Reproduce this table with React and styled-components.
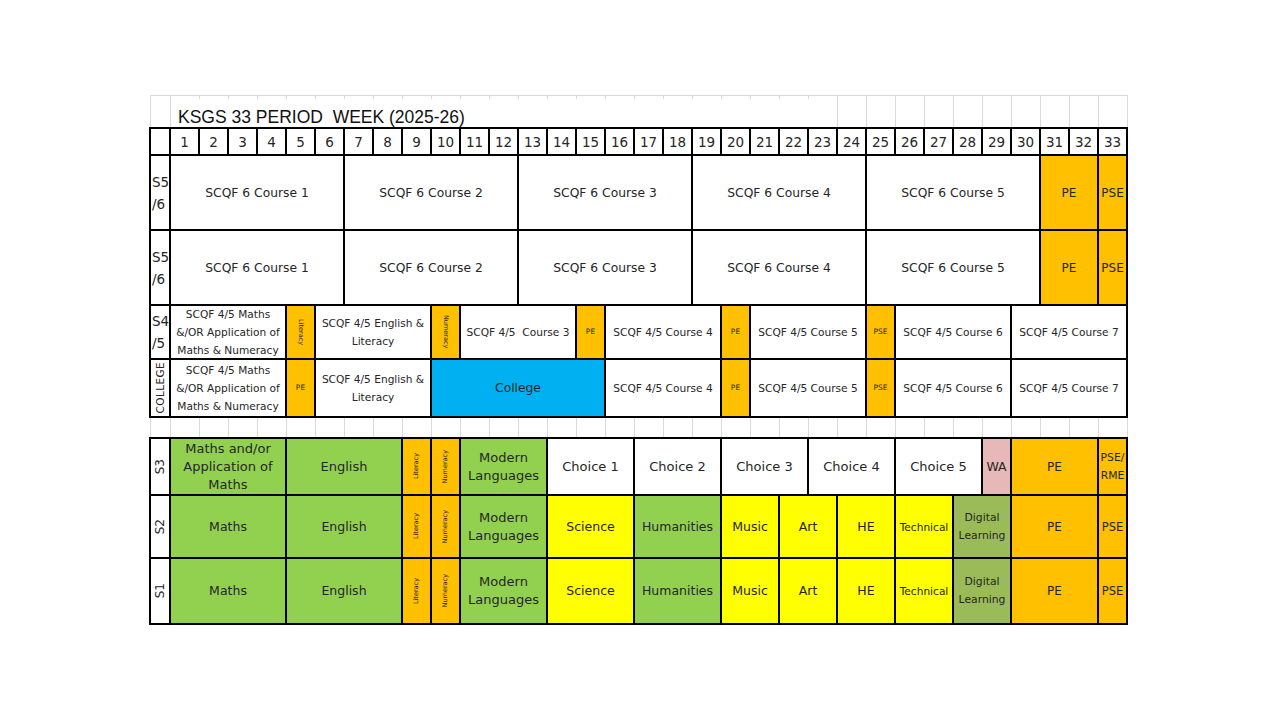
import styled, { createGlobalStyle } from 'styled-components';

const ORANGE = '#FFC000';
const GREEN = '#92D050';
const YELLOW = '#FFFF00';
const OLIVE = '#9BBB59';
const BLUE = '#00B0F0';
const PINK = '#E6B8B7';

const GlobalStyle = createGlobalStyle`
  html, body {
    margin: 0;
    padding: 0;
    background: #fff;
  }
  body {
    font-family: "DejaVu Sans", "Liberation Sans", sans-serif;
    color: #262626;
  }
`;

const Page = styled.div`
  width: 1280px;
  height: 720px;
  padding: 95px 0 0 149px;
  box-sizing: border-box;
  overflow: hidden;
`;

const Band = styled.div`
  display: grid;
  grid-template-columns: 20px repeat(33, 29px);
  grid-template-rows: ${({ $rows }) => $rows};
  width: fit-content;
`;

const Table = styled(Band)`
  border-left: 2px solid #000;
  border-top: 2px solid #000;
`;

const SheetBand = styled(Band)`
  margin-left: 1px;
  border-left: 1px solid #d9d9d9;
  border-top: ${({ $top }) => ($top ? '1px solid #d9d9d9' : 'none')};
`;

const GridLine = styled.div`
  grid-row: 1;
  grid-column: ${({ $col }) => $col};
  border-right: 1px solid #d9d9d9;
`;

const Title = styled.div`
  grid-row: 1;
  grid-column: 2 / span 23;
  margin: 3px 1px 0 0;
  background: #fff;
  z-index: 1;
  display: flex;
  align-items: flex-end;
  padding: 0 0 0 7px;
  font-family: "Liberation Sans", Arial, sans-serif;
  font-size: 17.5px;
  line-height: 19px;
  color: #111;
  white-space: pre;
`;

const Cell = styled.div`
  grid-column: span ${({ $span }) => $span || 1};
  background: ${({ $bg }) => $bg || '#fff'};
  border-right: 2px solid #000;
  border-bottom: 2px solid #000;
  display: flex;
  align-items: center;
  justify-content: center;
  text-align: center;
  font-size: ${({ $size }) => $size || 12.5}px;
  line-height: ${({ $lh }) => $lh || 18}px;
  white-space: pre;
  overflow: hidden;
  min-width: 0;
`;

const Label = styled.div`
  border-right: 2px solid #000;
  border-bottom: 2px solid #000;
  display: flex;
  flex-direction: column;
  justify-content: center;
  align-items: ${({ $rotate }) => ($rotate ? 'center' : 'flex-start')};
  padding-left: ${({ $rotate }) => ($rotate ? 0 : 1)}px;
  font-size: ${({ $size }) => $size || 13.5}px;
  line-height: 22px;
  white-space: pre;
  overflow: hidden;
`;

const Turned = styled.span`
  writing-mode: vertical-rl;
  transform: ${({ $down }) => ($down ? 'none' : 'rotate(180deg)')};
  font-size: ${({ $size }) => $size || 12}px;
  line-height: 1;
  letter-spacing: ${({ $spacing }) => $spacing || 0}px;
`;

const periods = Array.from({ length: 33 }, (_, i) => i + 1);

const scqf6 = [
  { span: 6, text: 'SCQF 6 Course 1' },
  { span: 6, text: 'SCQF 6 Course 2' },
  { span: 6, text: 'SCQF 6 Course 3' },
  { span: 6, text: 'SCQF 6 Course 4' },
  { span: 6, text: 'SCQF 6 Course 5' },
  { span: 2, text: 'PE', bg: ORANGE, size: 12 },
  { span: 1, text: 'PSE', bg: ORANGE, size: 12 },
];

const maths45 = { span: 4, text: 'SCQF 4/5 Maths\n&/OR Application of\nMaths & Numeracy', size: 10.6 };
const english45 = { span: 4, text: 'SCQF 4/5 English &\nLiteracy', size: 10.6 };
const seniorTail = [
  { span: 4, text: 'SCQF 4/5 Course 4' },
  { span: 1, text: 'PE', bg: ORANGE, size: 7.5 },
  { span: 4, text: 'SCQF 4/5 Course 5' },
  { span: 1, text: 'PSE', bg: ORANGE, size: 7.5 },
  { span: 4, text: 'SCQF 4/5 Course 6' },
  { span: 4, text: 'SCQF 4/5 Course 7' },
];

const topRows = [
  { label: 'S5\n/6', cells: scqf6 },
  { label: 'S5\n/6', cells: scqf6 },
  {
    label: 'S4\n/5',
    cells: [
      maths45,
      { span: 1, vtext: 'Literacy', down: true, bg: ORANGE },
      english45,
      { span: 1, vtext: 'Numeracy', down: true, bg: ORANGE },
      { span: 4, text: 'SCQF 4/5  Course 3' },
      { span: 1, text: 'PE', bg: ORANGE, size: 7.5 },
      ...seniorTail,
    ],
  },
  {
    label: 'COLLEGE',
    rotate: true,
    cells: [
      maths45,
      { span: 1, text: 'PE', bg: ORANGE, size: 7.5 },
      english45,
      { span: 6, text: 'College', bg: BLUE, size: 12.3 },
      ...seniorTail,
    ],
  },
];

const lowerCore = (mathsText, size) => [
  { span: 4, text: mathsText, bg: GREEN, size },
  { span: 4, text: 'English', bg: GREEN, size },
  { span: 1, vtext: 'Literacy', bg: ORANGE },
  { span: 1, vtext: 'Numeracy', bg: ORANGE },
  { span: 3, text: 'Modern\nLanguages', bg: GREEN, size: 13 },
];

const juniorTail = [
  { span: 3, text: 'Science', bg: YELLOW },
  { span: 3, text: 'Humanities', bg: GREEN },
  { span: 2, text: 'Music', bg: YELLOW },
  { span: 2, text: 'Art', bg: YELLOW },
  { span: 2, text: 'HE', bg: YELLOW },
  { span: 2, text: 'Technical', bg: YELLOW, size: 10.6 },
  { span: 2, text: 'Digital\nLearning', bg: OLIVE, size: 10.8 },
  { span: 3, text: 'PE', bg: ORANGE, size: 12 },
  { span: 1, text: 'PSE', bg: ORANGE, size: 11.5 },
];

const bottomRows = [
  {
    label: 'S3',
    cells: [
      ...lowerCore('Maths and/or\nApplication of\nMaths', 13),
      { span: 3, text: 'Choice 1', size: 13 },
      { span: 3, text: 'Choice 2', size: 13 },
      { span: 3, text: 'Choice 3', size: 13 },
      { span: 3, text: 'Choice 4', size: 13 },
      { span: 3, text: 'Choice 5', size: 13 },
      { span: 1, text: 'WA', bg: PINK, size: 12.5 },
      { span: 3, text: 'PE', bg: ORANGE, size: 12 },
      { span: 1, text: 'PSE/\nRME', bg: ORANGE, size: 10.8 },
    ],
  },
  { label: 'S2', cells: [...lowerCore('Maths', 12.5), ...juniorTail] },
  { label: 'S1', cells: [...lowerCore('Maths', 12.5), ...juniorTail] },
];

const renderCells = (cells, rowKey, defaultSize) =>
  cells.map((c, i) => (
    <Cell key={`${rowKey}-${i}`} $span={c.span} $bg={c.bg} $size={c.size || defaultSize}>
      {c.vtext ? (
        <Turned $down={c.down} $size={6.5}>
          {c.vtext}
        </Turned>
      ) : (
        c.text
      )}
    </Cell>
  ));

const gridLines = (key) =>
  Array.from({ length: 34 }, (_, i) => <GridLine key={`${key}-${i}`} $col={i + 1} />);

export default function App() {
  return (
    <Page>
      <GlobalStyle />

      <SheetBand $rows="31px" $top>
        {gridLines('title')}
        <Title>KSGS 33 PERIOD  WEEK (2025-26)</Title>
      </SheetBand>

      <Table $rows="27px 75px 75px 54px 58px">
        <Label />
        {periods.map((n) => (
          <Cell key={`p${n}`} $size={13.5}>
            {n}
          </Cell>
        ))}
        {topRows.map((row, r) => [
          <Label key={`tl${r}`} $rotate={row.rotate}>
            {row.rotate ? (
              <Turned $size={10.5} $spacing={0.4}>
                {row.label}
              </Turned>
            ) : (
              row.label
            )}
          </Label>,
          ...renderCells(row.cells, `t${r}`, r < 2 ? 12.3 : 10.6),
        ])}
      </Table>

      <SheetBand $rows="19px">{gridLines('gap')}</SheetBand>

      <Table $rows="57px 63px 66px">
        {bottomRows.map((row, r) => [
          <Label key={`bl${r}`} $rotate>
            <Turned $size={12}>{row.label}</Turned>
          </Label>,
          ...renderCells(row.cells, `b${r}`, 12.5),
        ])}
      </Table>
    </Page>
  );
}
